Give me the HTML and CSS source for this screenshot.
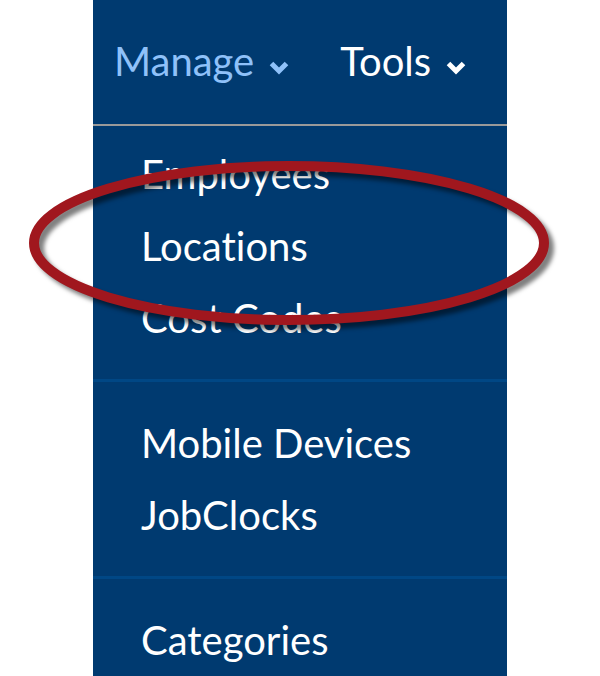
FILE: index.html
```
<!DOCTYPE html>
<html lang="en">
<head>
    <meta charset="UTF-8">
    <meta name="viewport" content="width=device-width, initial-scale=1.0">
    <title>Manage</title>
    <link rel="stylesheet" href="styles.css">
</head>
<body>
    <nav class="menu">
        <div class="menu-bar">
            <button type="button" class="menu-tab active">Manage
                <svg class="chevron" viewBox="0 0 20 14" aria-hidden="true"><path d="M2.5 2.5 L10 10 L17.5 2.5"/></svg>
            </button>
            <button type="button" class="menu-tab">Tools
                <svg class="chevron" viewBox="0 0 20 14" aria-hidden="true"><path d="M2.5 2.5 L10 10 L17.5 2.5"/></svg>
            </button>
        </div>
        <ul class="menu-group">
            <li><a href="#">Employees</a></li>
            <li><a href="#">Locations</a></li>
            <li><a href="#">Cost Codes</a></li>
        </ul>
        <ul class="menu-group">
            <li><a href="#">Mobile Devices</a></li>
            <li><a href="#">JobClocks</a></li>
        </ul>
        <ul class="menu-group">
            <li><a href="#">Categories</a></li>
        </ul>

        <!-- Highlight around Locations -->
        <svg class="highlight" viewBox="0 0 540 180" aria-hidden="true">
            <ellipse cx="262" cy="87" rx="255" ry="77"/>
        </svg>
    </nav>
</body>
</html>
```
FILE: styles.css
```
* {
    box-sizing: border-box;
}
body {
    margin: 0;
    background: #fff;
    font-family: Lato, sans-serif;
    font-size: 40px;
    font-variant-ligatures: none;
    line-height: 48px;
}
.menu {
    position: relative;
    width: 69%;
    min-height: 100vh;
    margin: 0 auto;
    background: #003a70;
}
.menu-bar {
    display: flex;
    gap: 51px;
    padding: 37px 21px 39px;
    border-bottom: 2px solid #999;
}
.menu-tab {
    display: flex;
    align-items: center;
    gap: 15px;
    padding: 0;
    border: none;
    background: none;
    color: #fff;
    font: inherit;
    cursor: pointer;
}
.menu-tab.active {
    color: #8fc1f9;
}
.chevron {
    width: 20px;
    height: 14px;
    margin-top: 13px;
    fill: none;
    stroke: currentColor;
    stroke-width: 5;
}
.menu-group {
    margin: 0;
    padding: 25px 48px;
    list-style: none;
}
.menu-bar + .menu-group {
    padding-top: 12px;
}
.menu-group + .menu-group {
    border-top: 3px solid #004785;
}
.menu-group a {
    display: block;
    padding: 12px 0;
    color: #fff;
    text-decoration: none;
}
.highlight {
    position: absolute;
    top: 156px;
    left: -66px;
    width: 540px;
    height: 180px;
    fill: none;
    stroke: #a0171e;
    stroke-width: 10;
    filter: drop-shadow(5px 5px 2px rgba(0, 0, 0, 0.5));
    pointer-events: none;
}
```
